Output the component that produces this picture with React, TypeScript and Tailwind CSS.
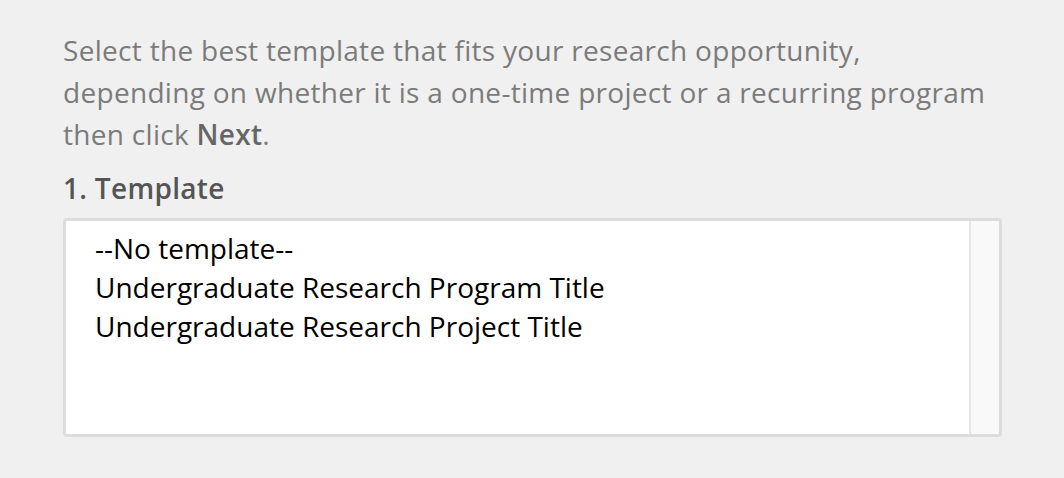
import React from "react";

export default function App() {
  return (
    <div className="w-[1064px] h-[478px] bg-[#f0f0f0] pl-[63px] pt-[29px] font-['Open_Sans',sans-serif]">
      <p className="text-[28px] leading-[42px] tracking-[0.3px] text-[#7b7b7b] w-[980px]">
        Select the best template that fits your research opportunity,
        <br />
        depending on whether it is a one-time project or a recurring program
        <br />
        then click <span className="font-semibold text-[#666666]">Next</span>.
      </p>
      <div className="mt-[12px] text-[28px] leading-[42px] tracking-[0.3px] font-semibold text-[#555555]">1. Template</div>
      <div className="mt-[9px] w-[939px] h-[219px] border-[3px] border-[#dcdcdc] rounded-[4px] bg-white flex overflow-hidden">
        <div className="flex-1 pt-[8px] pl-[29px] text-[28px] leading-[39px] text-black">
          <div>--No template--</div>
          <div>Undergraduate Research Program Title</div>
          <div>Undergraduate Research Project Title</div>
        </div>
        <div className="w-[30px] h-full bg-[#f9f9f9] border-l-[2px] border-[#e6e6e6]" />
      </div>
    </div>
  );
}
